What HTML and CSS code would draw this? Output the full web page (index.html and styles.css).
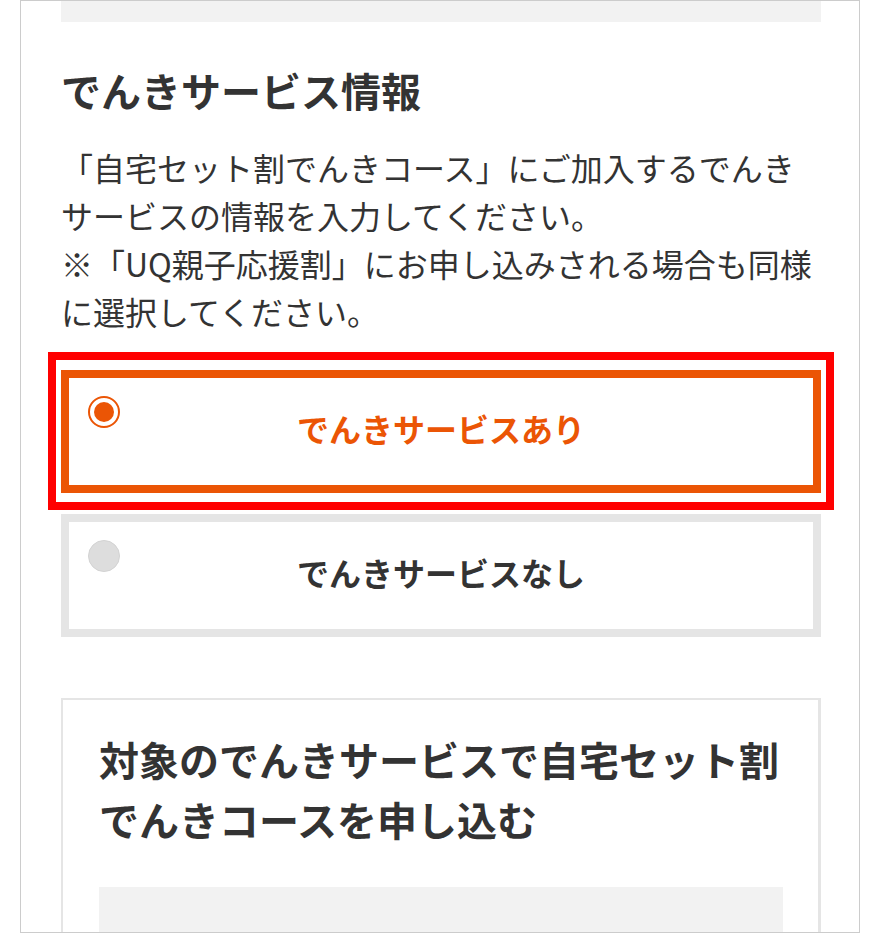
FILE: index.html
```html
<!DOCTYPE html>
<html lang="ja">
<head>
  <meta charset="UTF-8" />
  <meta name="viewport" content="width=device-width, initial-scale=1.0"/>
  <title>でんきサービス情報</title>
  <link rel="stylesheet" href="styles.css">
</head>
<body>

  <div class="pagina">
    <div class="bloco-anterior"></div>

    <h2 class="titulo">でんきサービス情報</h2>
    <p class="texto">「自宅セット割でんきコース」にご加入するでんきサービスの情報を入力してください。<br>※「UQ親子応援割」にお申し込みされる場合も同様に選択してください。</p>

    <div class="opcoes">
      <label class="opcao selecionada">
        <span class="radio"></span>
        <span class="rotulo">でんきサービスあり</span>
        <span class="destaque"></span>
      </label>
      <label class="opcao">
        <span class="radio"></span>
        <span class="rotulo">でんきサービスなし</span>
      </label>
    </div>

    <div class="caixa">
      <h3 class="caixa-titulo">対象のでんきサービスで自宅セット割でんきコースを申し込む</h3>
      <div class="caixa-cinza"></div>
    </div>
  </div>

</body>
</html>
```

FILE: styles.css
```css
* {
  box-sizing: border-box;
  margin: 0;
  padding: 0;
}

body {
  font-family: "Noto Sans CJK JP", "Noto Sans", sans-serif;
  color: #333;
  background-color: #fff;
}

/* CONTAINER */
.pagina {
  margin: 0 20px;
  height: 933px;
  border: 1px solid #ccc;
  padding: 0 38px 0 40px;
  overflow: hidden;
}

.bloco-anterior {
  height: 21px;
  background-color: #f2f2f2;
}

.titulo {
  font-size: 40px;
  font-weight: bold;
  line-height: 1.5;
  margin-top: 38px;
}

.texto {
  font-size: 32px;
  line-height: 1.5;
  margin-top: 23px;
}

/* OPCOES */
.opcoes {
  margin-top: 35px;
  display: flex;
  flex-direction: column;
  gap: 21px;
}

.opcao {
  position: relative;
  height: 123px;
  border: 8px solid #e5e5e5;
  display: flex;
  align-items: center;
  justify-content: center;
}

.opcao .rotulo {
  font-size: 32px;
  font-weight: bold;
  line-height: 1.5;
  padding-bottom: 8px;
}

.opcao .radio {
  position: absolute;
  top: 18px;
  left: 19px;
  width: 32px;
  height: 32px;
  border-radius: 50%;
  background-color: #ddd;
  border: 1px solid #d3d3d3;
}

.opcao.selecionada {
  border-color: #eb5505;
}

.opcao.selecionada .rotulo {
  color: #eb5505;
}

.opcao.selecionada .radio {
  background-color: #fff;
  border: 2px solid #eb5505;
}

.opcao.selecionada .radio::after {
  content: "";
  position: absolute;
  top: 4px;
  left: 4px;
  width: 20px;
  height: 20px;
  border-radius: 50%;
  background-color: #eb5505;
}

.destaque {
  position: absolute;
  top: -26px;
  left: -21px;
  right: -21px;
  bottom: -25px;
  border: 8px solid #ff0000;
  pointer-events: none;
}

/* CAIXA */
.caixa {
  margin-top: 61px;
  border: 2px solid #e5e5e5;
  border-right-width: 3px;
  padding: 29px 35px 0 36px;
}

.caixa-titulo {
  font-size: 40px;
  font-weight: bold;
  line-height: 1.5;
}

.caixa-cinza {
  margin-top: 38px;
  height: 200px;
  background-color: #f2f2f2;
}
```
